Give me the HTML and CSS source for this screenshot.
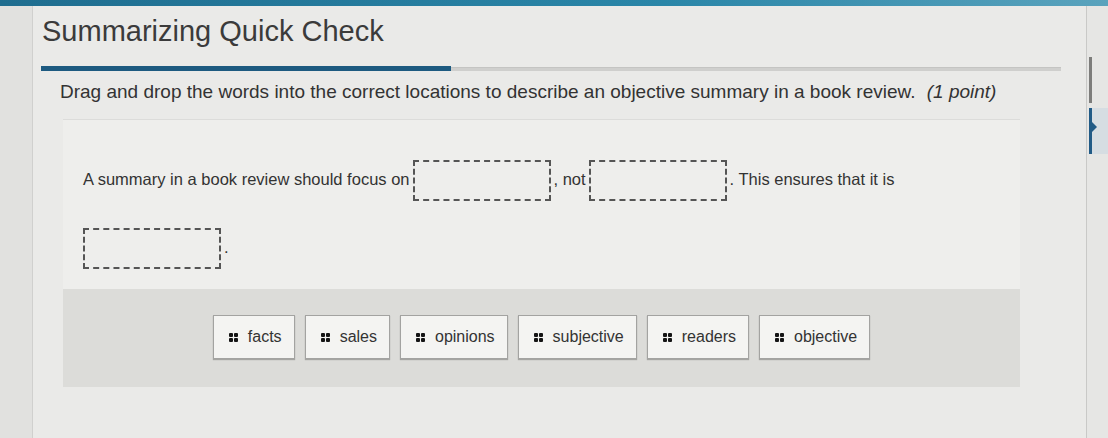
FILE: index.html
```html
<!DOCTYPE html>
<html lang="en">
<head>
    <meta charset="UTF-8">
    <meta name="viewport" content="width=device-width, initial-scale=1.0">
    <title>Summarizing Quick Check</title>
    <link rel="stylesheet" href="styles.css">
</head>

<body>

<div class="topbar"></div>

<div class="shell">
    <div class="gutter"></div>

    <div class="main">
        <h1 class="title">Summarizing Quick Check</h1>
        <div class="progress"><div class="progress-fill"></div></div>

        <p class="prompt">Drag and drop the words into the correct locations to describe an objective summary in a book review. <em>(1 point)</em></p>

        <div class="card">
            <p class="sentence">A summary in a book review should focus on<span class="blank"></span>, not<span class="blank"></span>. This ensures that it is<br><span class="blank blank-first"></span>.</p>

            <div class="bank">
                <div class="chip"><span class="grip"></span>facts</div>
                <div class="chip"><span class="grip"></span>sales</div>
                <div class="chip"><span class="grip"></span>opinions</div>
                <div class="chip"><span class="grip"></span>subjective</div>
                <div class="chip"><span class="grip"></span>readers</div>
                <div class="chip"><span class="grip"></span>objective</div>
            </div>
        </div>
    </div>

    <div class="side">
        <div class="tab"></div>
        <div class="tab active"></div>
    </div>
</div>

</body>
</html>
```

FILE: styles.css
```css
body {
    margin: 0;
    background: #e3e3e1;
    font-family: "Liberation Sans", Arial, sans-serif;
    color: #3a3a3a;
    height: 438px;
    overflow: hidden;
}

.topbar {
    height: 6px;
    background: linear-gradient(to right, #1f6d8f, #2a86a8 60%, #5aa3bd);
}

.shell {
    display: flex;
    height: 432px;
}

.gutter {
    width: 32px;
    background: #e1e1df;
    border-right: 1px solid #d0d0ce;
}

.main {
    flex: 1;
    background: #eaeae8;
    padding-left: 8px;
    border-right: 1px solid #c9c9c7;
}

.title {
    margin: 8px 0 0 1px;
    font-size: 29px;
    font-weight: normal;
    line-height: 34px;
    color: #3b3b3b;
}

/* progress through the check */
.progress {
    margin-top: 19px;
    width: 1020px;
    height: 3px;
    background: #cfcfcd;
    border-top: 1px solid #c4c4c2;
}
.progress-fill {
    width: 410px;
    height: 5px;
    margin-top: -2px;
    background: #1d5a80;
}

.prompt {
    margin: 8px 0 0 19px;
    font-size: 19px;
    line-height: 26px;
    color: #333;
}
.prompt em {
    margin-left: 6px;
}

.card {
    margin: 14px 0 0 22px;
    width: 957px;
    background: #eeeeec;
    border-top: 1px solid #dcdcda;
}

.sentence {
    margin: 0;
    padding: 25px 20px 8px 20px;
    font-size: 16.5px;
    line-height: 68px;
    color: #333;
}

/* empty drop target */
.blank {
    display: inline-block;
    width: 134px;
    height: 37px;
    margin: 0 3px;
    vertical-align: middle;
    border: 2px dashed #555;
}
.blank-first {
    margin-left: 0;
}

.bank {
    display: flex;
    justify-content: center;
    align-items: center;
    gap: 10px;
    padding: 26px 0 28px 0;
    background: #dcdcd9;
}

.chip {
    display: flex;
    align-items: center;
    gap: 15px;
    height: 42px;
    padding: 0 12px 0 15px;
    background: #f4f4f2;
    border: 1px solid #a3a3a1;
    box-shadow: 0 1px 1px rgba(0, 0, 0, 0.25);
    font-size: 16px;
    color: #333;
}

/* four dot drag handle */
.grip {
    width: 4px;
    height: 4px;
    margin-top: -5px;
    border-radius: 1px;
    background: #151515;
    box-shadow: 5px 0 #151515, 0 5px #151515, 5px 5px #151515;
}

.side {
    width: 21px;
    background: #e6e6e4;
    padding-top: 51px;
}

.tab {
    height: 46px;
    border-left: 3px solid #7d7d7b;
    margin-left: 2px;
}
.tab.active {
    position: relative;
    margin-top: 5px;
    border-left-color: #215b86;
    background: #d6dde2;
}
.tab.active::after {
    content: "";
    position: absolute;
    left: 0;
    top: 14px;
    border-left: 5px solid #215b86;
    border-top: 5px solid transparent;
    border-bottom: 5px solid transparent;
}
```
